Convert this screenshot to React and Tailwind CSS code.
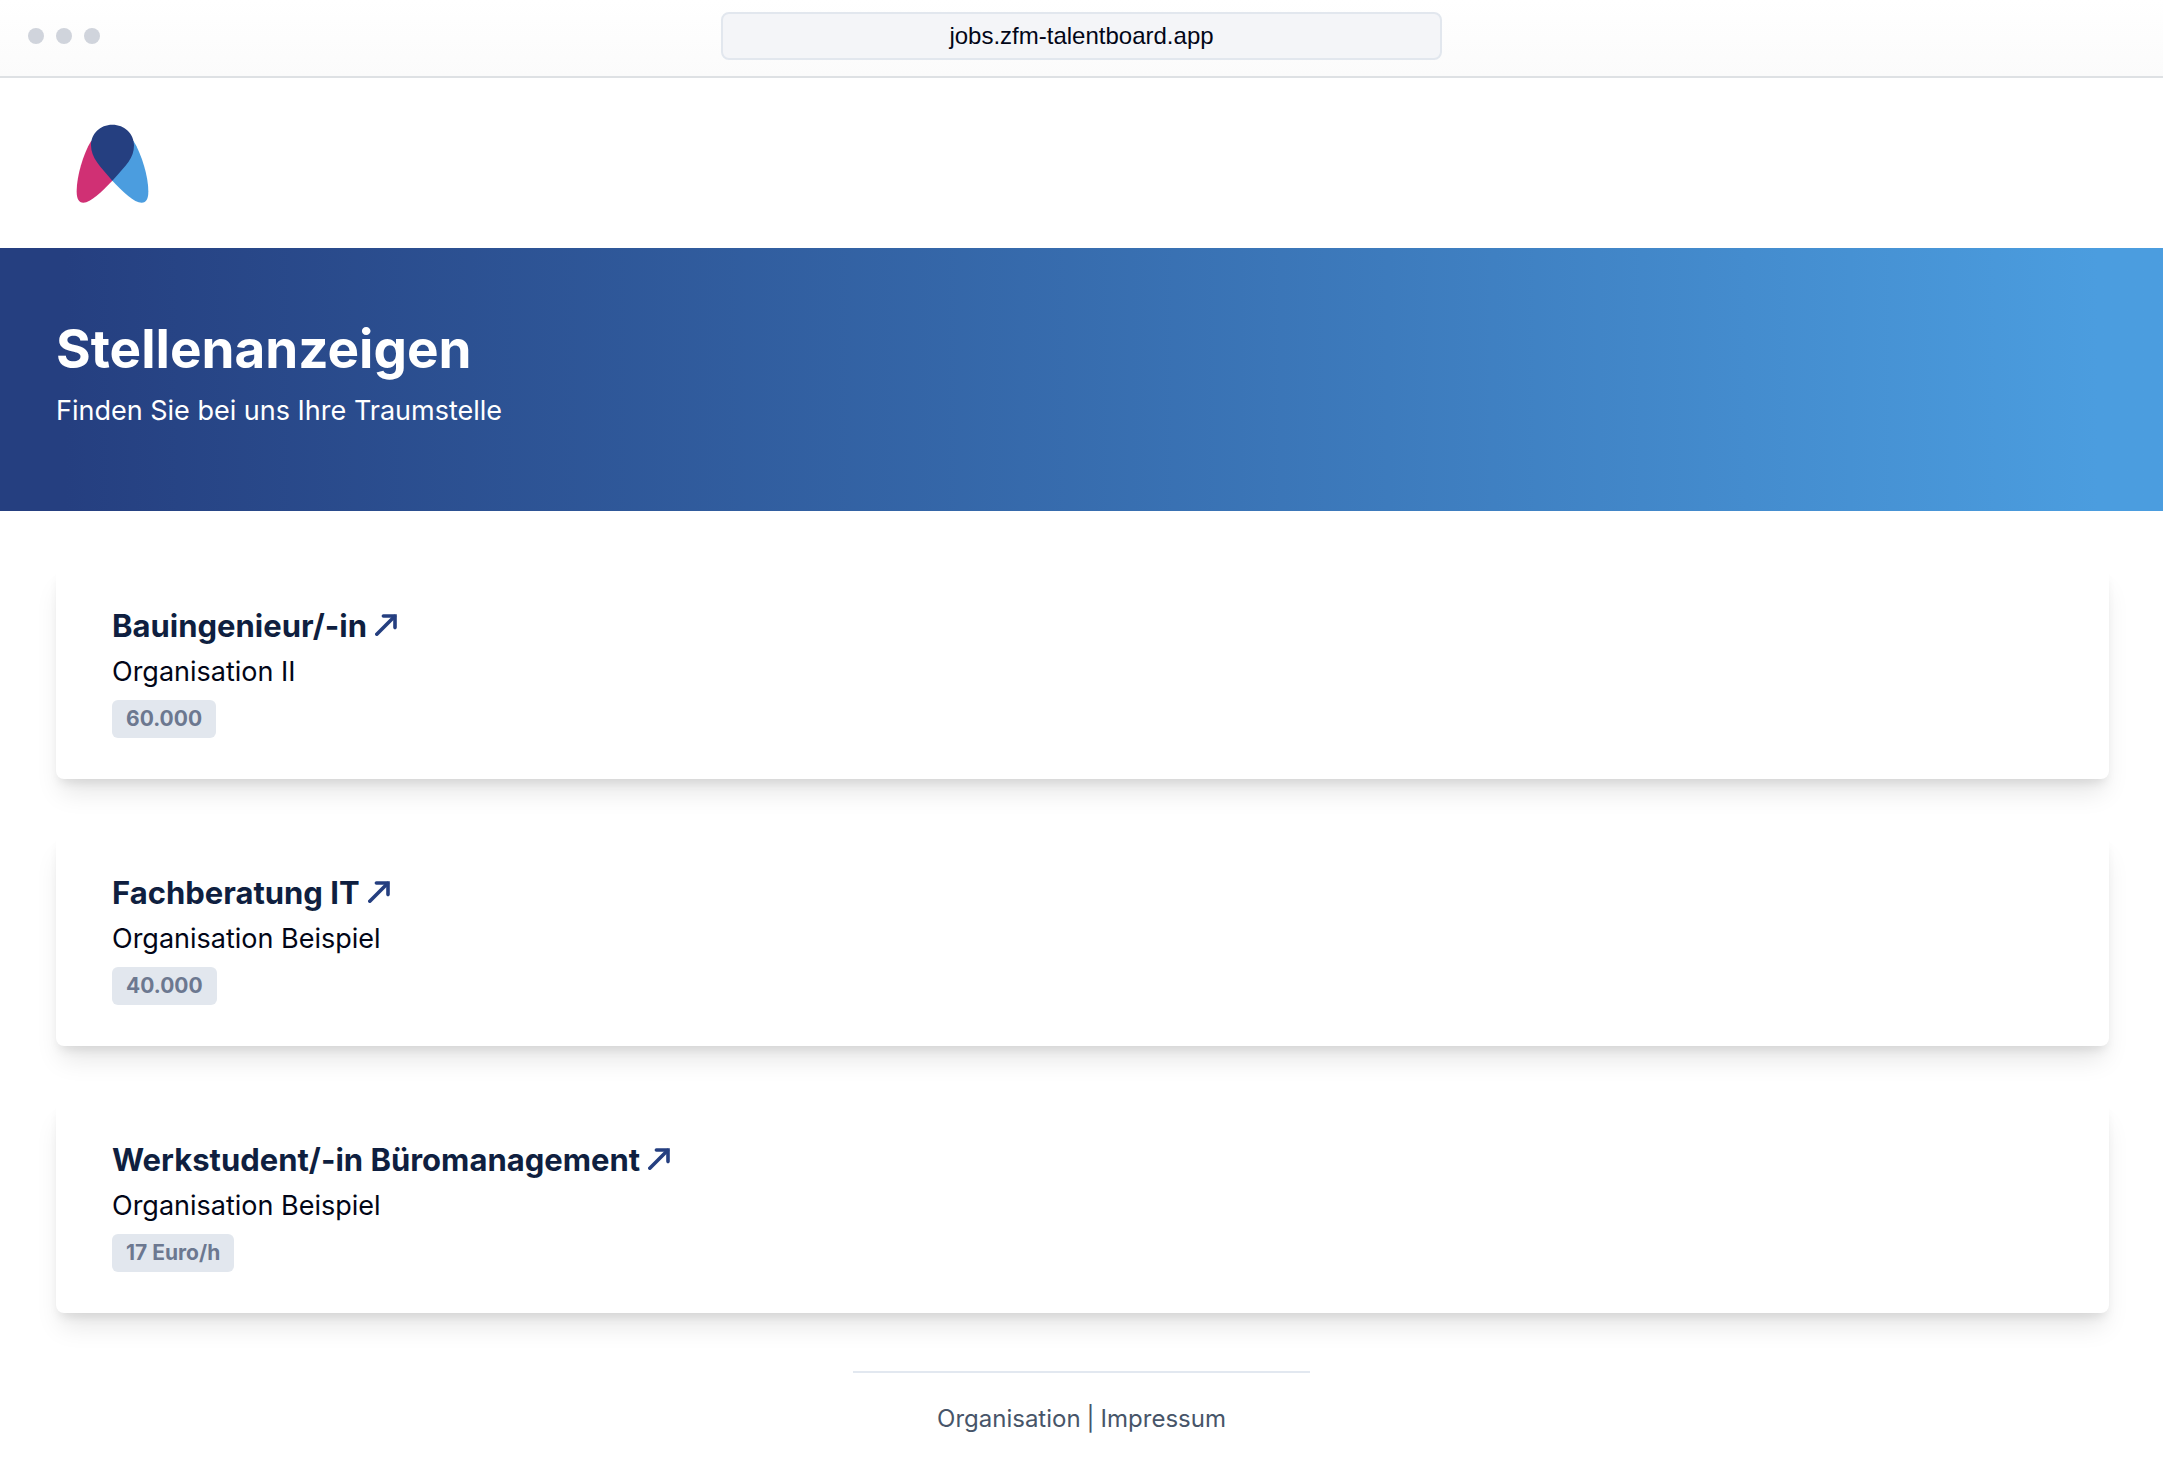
import React from 'react';

const jobs = [
  { id: 1, title: 'Bauingenieur/-in', organisation: 'Organisation II', salary: '60.000' },
  { id: 2, title: 'Fachberatung IT', organisation: 'Organisation Beispiel', salary: '40.000' },
  { id: 3, title: 'Werkstudent/-in Büromanagement', organisation: 'Organisation Beispiel', salary: '17 Euro/h' },
];

function Logo() {
  return (
    <svg viewBox="228 373 219 237" className="w-[73px] h-[79px]" role="img" aria-label="Logo">
      <path
        fill="#d03074"
        d="M273 425 C250 462 230 530 230 575 C230 598 236 609 250 609 C272 609 306 575 337 543 L400 460 L330 400 Z"
      />
      <path
        fill="#4b9ddf"
        d="M401 425 C424 462 445 530 445 575 C445 598 439 609 425 609 C402 609 370 577 337 543 L300 460 L350 400 Z"
      />
      <path
        fill="#253f80"
        d="M337 375 C374 375 402 402 402 437 C402 475 379 497 337 543 C300 500 273 475 273 437 C273 402 300 375 337 375 Z"
      />
    </svg>
  );
}

function ArrowIcon() {
  return (
    <svg viewBox="0 0 22 22" className="mb-[3px] h-[22px] w-[22px]" fill="none" stroke="#253f80" aria-hidden="true">
      <path d="M1.8 20.2 L19.5 2.5" strokeWidth="3.6" strokeLinecap="round" />
      <path d="M8.4 2 H20 V13.6" strokeWidth="3.6" strokeLinecap="round" />
    </svg>
  );
}

function BrowserBar() {
  return (
    <div className="relative flex h-[78px] items-start justify-center border-b-2 border-[#dee1e4] bg-linear-to-b from-white to-[#fbfbfb] pt-3">
      <div className="absolute left-7 top-7 flex gap-3">
        <span className="h-4 w-4 rounded-full bg-[#d0d4dc]" />
        <span className="h-4 w-4 rounded-full bg-[#d0d4dc]" />
        <span className="h-4 w-4 rounded-full bg-[#d0d4dc]" />
      </div>
      <input
        type="text"
        aria-label="Adresse"
        defaultValue="jobs.zfm-talentboard.app"
        className="h-12 w-1/3 rounded-lg border-2 border-[#e2e7ee] bg-[#f4f5f8] text-center font-['Liberation_Sans',sans-serif] text-[24px] text-[#020617] outline-none"
      />
    </div>
  );
}

function JobCard({ job }) {
  return (
    <article className="flex flex-col items-start rounded-lg bg-white px-14 pt-[35px] pb-[41px] shadow-[0_18px_26px_-5px_rgba(0,0,0,0.1),0_7px_11px_-4px_rgba(0,0,0,0.1)]">
      <h2 className="text-[31px] leading-[46px] font-bold text-[#0f1f40]">
        <a href="#" className="flex items-center gap-2">
          {job.title}
          <ArrowIcon />
        </a>
      </h2>
      <p className="text-[27px] leading-[46px] text-[#020617]">{job.organisation}</p>
      <span className="mt-[5px] rounded-md bg-[#e2e7ee] px-[14px] text-[21px] leading-[38px] font-bold text-[#6c7890]">
        {job.salary}
      </span>
    </article>
  );
}

export default function App() {
  return (
    <div className="min-h-screen bg-white font-[Inter,sans-serif]">
      <BrowserBar />

      <header className="px-[76px] pt-[46px] pb-[45px]">
        <a href="#" className="block w-fit">
          <Logo />
        </a>
      </header>

      <section className="bg-linear-to-r from-[#253f80] from-3% to-[#4b9ddf] to-97% px-14 pt-[69px] pb-[79px] text-white">
        <h1 className="text-[53px] leading-[64px] font-bold">Stellenanzeigen</h1>
        <p className="mt-2 text-[27px] leading-[43px]">Finden Sie bei uns Ihre Traumstelle</p>
      </section>

      <main className="flex flex-col gap-14 pt-[57px] pr-[54px] pl-14">
        {jobs.map((job) => (
          <JobCard key={job.id} job={job} />
        ))}
      </main>

      <footer className="flex flex-col items-center pt-[58px] text-[24px] text-[#475569]">
        <hr className="w-[457px] border-t-2 border-[#e2e8f0]" />
        <nav className="flex gap-[6px] pt-7 leading-9">
          <a href="#">Organisation</a>
          <span>|</span>
          <a href="#">Impressum</a>
        </nav>
      </footer>
    </div>
  );
}
